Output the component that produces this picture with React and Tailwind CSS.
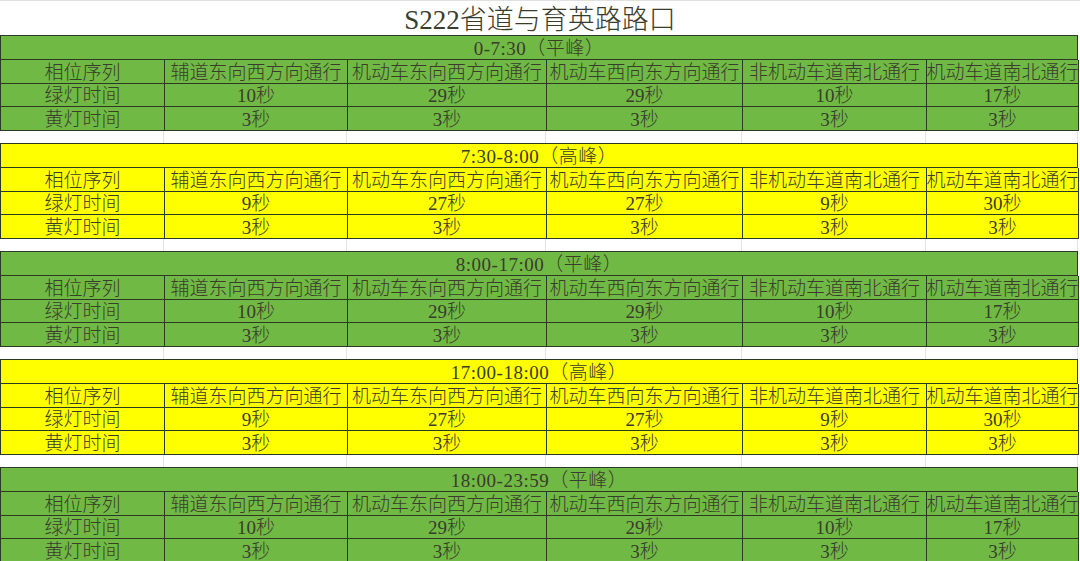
const cols = ["辅道东向西方向通行", "机动车东向西方向通行", "机动车西向东方向通行", "非机动车道南北通行", "机动车道南北通行"];

const periods = [
  { label: "0-7:30（平峰）", bg: "bg-[#70b944]", green: ["10秒", "29秒", "29秒", "10秒", "17秒"] },
  { label: "7:30-8:00（高峰）", bg: "bg-[#ffff00]", green: ["9秒", "27秒", "27秒", "9秒", "30秒"] },
  { label: "8:00-17:00（平峰）", bg: "bg-[#70b944]", green: ["10秒", "29秒", "29秒", "10秒", "17秒"] },
  { label: "17:00-18:00（高峰）", bg: "bg-[#ffff00]", green: ["9秒", "27秒", "27秒", "9秒", "30秒"] },
  { label: "18:00-23:59（平峰）", bg: "bg-[#70b944]", green: ["10秒", "29秒", "29秒", "10秒", "17秒"] },
];

const grid = "grid grid-cols-[164px_183px_199px_196px_184px_152px]";

function Row({ cells, h }) {
  return (
    <div className={grid}>
      {cells.map((c, i) => (
        <div key={i} className={`${h} flex items-center justify-center border-r border-b border-[#2c3a24] whitespace-nowrap leading-none pt-[1px]`}>
          {c}
        </div>
      ))}
    </div>
  );
}

function Block({ p }) {
  return (
    <div className={`${p.bg} w-[1078px] border-t border-l border-[#2c3a24]`}>
      <div className="h-[24px] flex items-center justify-center border-r border-b border-[#2c3a24] leading-none pt-[1px] tracking-[0.5px]">{p.label}</div>
      <Row h="h-[24px]" cells={["相位序列", ...cols]} />
      <Row h="h-[23px]" cells={["绿灯时间", ...p.green]} />
      <Row h="h-[24px]" cells={["黄灯时间", "3秒", "3秒", "3秒", "3秒", "3秒"]} />
    </div>
  );
}

function Gap() {
  return (
    <div className={`${grid} h-[12px]`}>
      {[0, 1, 2, 3, 4, 5].map((i) => (
        <div key={i} className="border-r border-[#e4e4e4]" />
      ))}
    </div>
  );
}

export default function App() {
  return (
    <div
      className="w-[1080px] h-[561px] overflow-hidden bg-white text-[#3a3c2c] text-[19px] font-light"
      style={{ fontFamily: '"Liberation Serif", "Noto Sans CJK SC", serif' }}
    >
      <div className="h-[35px] flex items-center justify-center text-[27px] leading-none border-t border-[#e0e0e0] pt-[5px]">
        S222省道与育英路路口
      </div>
      {periods.map((p, i) => (
        <div key={i}>
          {i > 0 && <Gap />}
          <Block p={p} />
        </div>
      ))}
    </div>
  );
}
